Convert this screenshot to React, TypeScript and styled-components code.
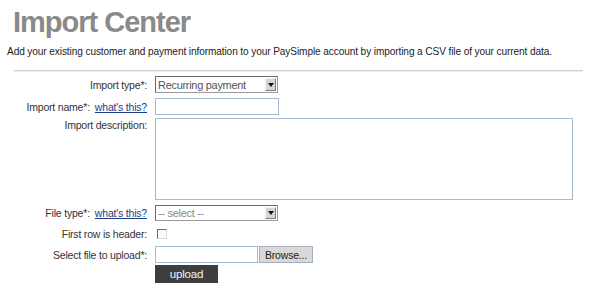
import { FC, ReactElement } from 'react'
import styled, { createGlobalStyle } from 'styled-components'

const Global = createGlobalStyle`
  html, body {
    margin: 0;
    padding: 0;
    background: #ffffff;
  }
  body {
    font-family: 'Liberation Sans', Arial, sans-serif;
    color: #333333;
  }
`

const App: FC = (): ReactElement => {
  return (
    <Page>
      <Global />
      <Title>Import Center</Title>
      <Intro>
        Add your existing customer and payment information to your PaySimple account by importing a CSV file of your
        current data.
      </Intro>
      <Rule />
      <Form onSubmit={(e) => e.preventDefault()}>
        <Row $h={17}>
          <Label>Import type*:</Label>
          <SelectBox $w={123}>
            <Select defaultValue="recurring">
              <option value="recurring">Recurring payment</option>
              <option value="customer">Customer</option>
            </Select>
            <Arrow>
              <Caret />
            </Arrow>
          </SelectBox>
        </Row>
        <Row $h={15} $mt={5}>
          <Label>
            Import name*:
            <Help href="#">what's this?</Help>
          </Label>
          <TextInput $w={124} />
        </Row>
        <Row $h={82} $mt={5}>
          <Label $top>Import description:</Label>
          <Area />
        </Row>
        <Row $h={16} $mt={5}>
          <Label>
            File type*:
            <Help href="#">what's this?</Help>
          </Label>
          <SelectBox $w={123}>
            <Select $muted defaultValue="">
              <option value="">-- select --</option>
              <option value="csv">CSV</option>
            </Select>
            <Arrow>
              <Caret />
            </Arrow>
          </SelectBox>
        </Row>
        <Row $h={16} $mt={5}>
          <Label>First row is header:</Label>
          <Check />
        </Row>
        <Row $h={16} $mt={4}>
          <Label>Select file to upload*:</Label>
          <FileLine>
            <TextInput $w={103} />
            <Browse type="button">Browse...</Browse>
          </FileLine>
        </Row>
        <Row $h={18} $mt={3}>
          <span />
          <Upload type="submit">upload</Upload>
        </Row>
      </Form>
    </Page>
  )
}

const Page = styled.div`
  width: 589px;
  height: 288px;
  padding-top: 6px;
  box-sizing: border-box;
  overflow: hidden;
`
const Title = styled.h1`
  margin: 0 0 0 13px;
  font-size: 29px;
  line-height: 32px;
  font-weight: bold;
  letter-spacing: -1px;
  color: #8a8a8a;
`
const Intro = styled.p`
  margin: 8px 0 0 7px;
  font-size: 10.1px;
  line-height: 12px;
  letter-spacing: -0.1px;
  color: #222222;
`
const Rule = styled.div`
  margin: 12px 6px 0 14px;
  height: 1px;
  background: #cfcfcf;
  box-shadow: 0 1px 0 #ededed;
`
const Form = styled.form`
  margin: 5px 0 0 14px;
  display: flex;
  flex-direction: column;
`
const Row = styled.div<{ $h: number; $mt?: number }>`
  display: grid;
  grid-template-columns: 133px 1fr;
  column-gap: 8px;
  height: ${(p) => p.$h}px;
  margin-top: ${(p) => p.$mt || 0}px;
`
const Label = styled.label<{ $top?: boolean }>`
  display: flex;
  justify-content: flex-end;
  align-items: ${(p) => (p.$top ? 'flex-start' : 'center')};
  padding-top: ${(p) => (p.$top ? 1 : 0)}px;
  gap: 5px;
  font-size: 10.5px;
  letter-spacing: -0.2px;
  color: #333333;
  white-space: nowrap;
`
const Help = styled.a`
  color: #1d3c8c;
  text-decoration: underline;
`
const SelectBox = styled.div<{ $w: number }>`
  width: ${(p) => p.$w}px;
  height: 100%;
  box-sizing: border-box;
  display: flex;
  align-items: stretch;
  border: 1px solid #6b6b6b;
  border-right-color: #9a9a9a;
  border-bottom-color: #9a9a9a;
  background: #ffffff;
`
const Select = styled.select<{ $muted?: boolean }>`
  flex: 1;
  min-width: 0;
  appearance: none;
  border: 0;
  outline: none;
  background: transparent;
  padding: 0 0 0 2px;
  font-family: 'Liberation Sans', Arial, sans-serif;
  font-size: 11px;
  letter-spacing: -0.3px;
  color: ${(p) => (p.$muted ? '#8a8a8a' : '#555555')};
`
const Arrow = styled.span`
  width: 11px;
  margin: 1px;
  box-sizing: border-box;
  display: flex;
  align-items: center;
  justify-content: center;
  background: #d8d5cf;
  border: 1px solid;
  border-color: #f4f3f0 #7a7a7a #7a7a7a #f4f3f0;
`
const Caret = styled.span`
  width: 0;
  height: 0;
  border-left: 3px solid transparent;
  border-right: 3px solid transparent;
  border-top: 4px solid #111111;
`
const TextInput = styled.input<{ $w: number }>`
  width: ${(p) => p.$w}px;
  height: 100%;
  box-sizing: border-box;
  border: 1px solid #a8bad2;
  padding: 0 2px;
  outline: none;
`
const Area = styled.textarea`
  width: 418px;
  height: 100%;
  box-sizing: border-box;
  border: 1px solid #a8bad2;
  resize: none;
  outline: none;
`
const Check = styled.span`
  align-self: center;
  margin-left: 2px;
  width: 10px;
  height: 10px;
  box-sizing: border-box;
  border: 1px solid;
  border-color: #6e6e6e #dcdcdc #dcdcdc #6e6e6e;
  background: #fbfbfb;
`
const FileLine = styled.div`
  display: flex;
  gap: 1px;
`
const Browse = styled.button`
  width: 54px;
  height: 100%;
  padding: 0;
  box-sizing: border-box;
  background: #dcd9d4;
  border: 1px solid #9fb0c6;
  font-family: 'Liberation Sans', Arial, sans-serif;
  font-size: 10.5px;
  letter-spacing: -0.2px;
  color: #222222;
`
const Upload = styled.button`
  width: 63px;
  height: 100%;
  padding: 0;
  border: 0;
  background: #3e3e3e;
  color: #f4f4f4;
  font-family: 'Liberation Sans', Arial, sans-serif;
  font-size: 11.5px;
  letter-spacing: -0.2px;
`

export default App
